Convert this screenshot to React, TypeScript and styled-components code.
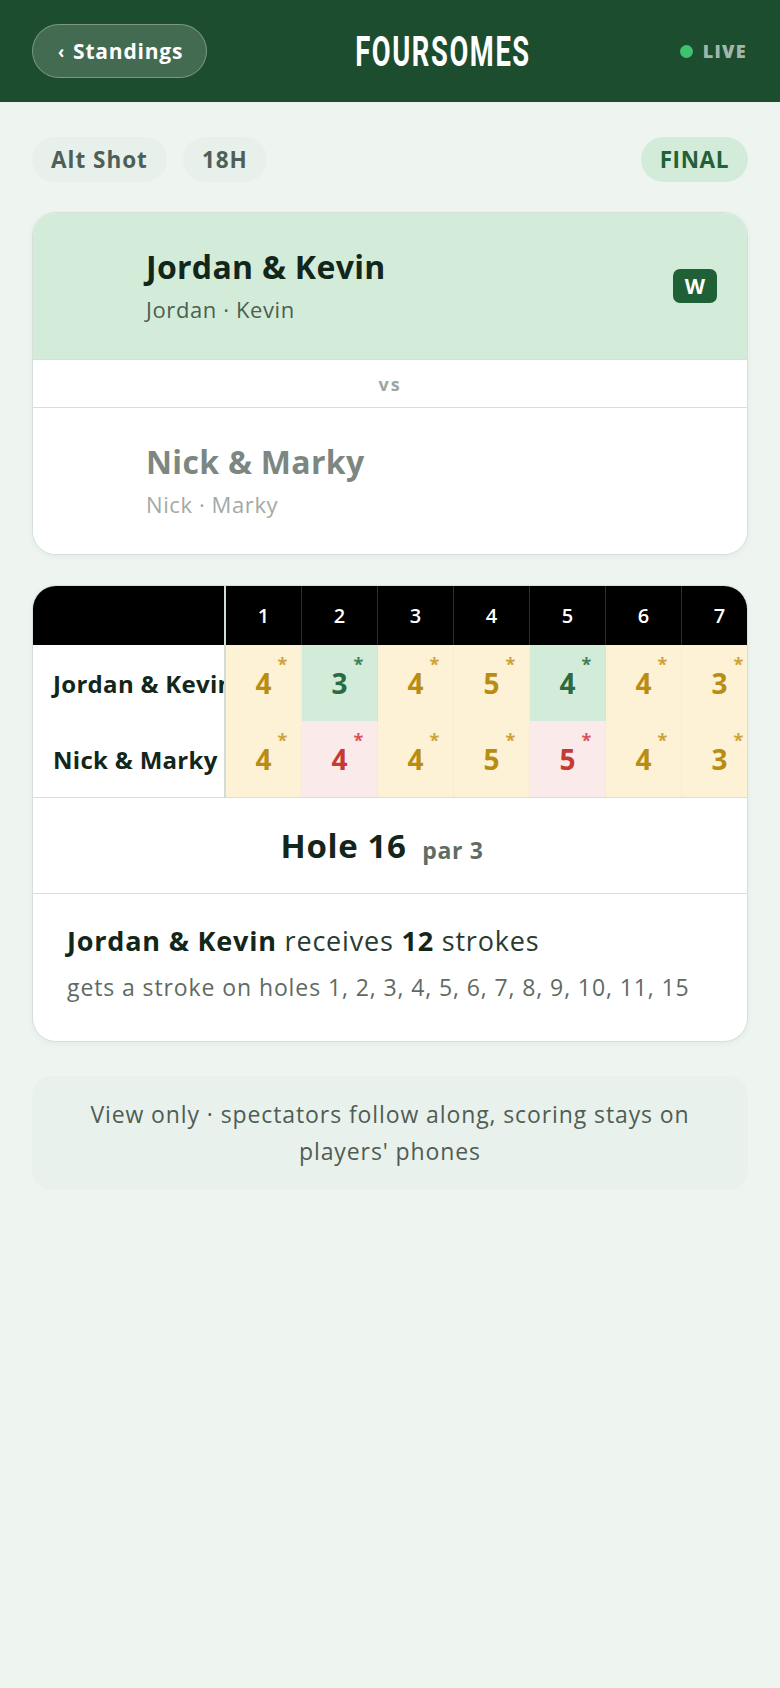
import styled, { createGlobalStyle } from 'styled-components';

const GlobalStyle = createGlobalStyle`
  * {
    box-sizing: border-box;
  }
  body {
    margin: 0;
    background: #eef5f0;
    font-family: 'Open Sans', Lato, sans-serif;
    color: #13261a;
  }
`;

const Page = styled.div`
  min-height: 1688px;
  background: #eef5f0;
`;

const Header = styled.header`
  height: 102px;
  background: #1d4d2f;
  display: flex;
  align-items: center;
  justify-content: space-between;
  padding: 0 33px 0 32px;
`;

const BackButton = styled.button`
  height: 54px;
  padding: 0 23px 0 25px;
  border-radius: 27px;
  background: rgba(255, 255, 255, 0.17);
  border: 1.5px solid rgba(255, 255, 255, 0.3);
  color: #ffffff;
  font-family: 'Open Sans', sans-serif;
  font-weight: 700;
  font-size: 21px;
  letter-spacing: 0.8px;
  display: flex;
  align-items: center;
  gap: 8px;
`;

const Chevron = styled.span`
  font-size: 17px;
  font-weight: 700;
`;

const Title = styled.h1`
  margin: 0;
  color: #ffffff;
  font-family: Roboto, sans-serif;
  font-weight: 700;
  font-size: 42px;
  letter-spacing: 2.5px;
  transform: scaleX(0.65);
  width: 280px;
  text-align: center;
`;

const Live = styled.div`
  display: flex;
  align-items: center;
  gap: 10px;
  color: rgba(255, 255, 255, 0.62);
  font-weight: 800;
  font-size: 18px;
  letter-spacing: 1.3px;
`;

const Dot = styled.span`
  width: 13px;
  height: 13px;
  border-radius: 50%;
  background: #3fc26f;
`;

const Content = styled.main`
  padding: 35px 32px 0;
  display: flex;
  flex-direction: column;
`;

const ChipRow = styled.div`
  display: flex;
  align-items: center;
  gap: 16px;
  margin-bottom: 30px;
`;

const Chip = styled.span<{ $tone?: 'final' }>`
  height: 45px;
  padding: 0 19px;
  border-radius: 23px;
  display: inline-flex;
  align-items: center;
  font-weight: 700;
  font-size: 22.5px;
  letter-spacing: ${({ $tone }) => ($tone === 'final' ? '0.6px' : '1px')};
  background: ${({ $tone }) => ($tone === 'final' ? '#d3ecd9' : '#e8f0eb')};
  color: ${({ $tone }) => ($tone === 'final' ? '#22603a' : '#4e5f55')};
  margin-left: ${({ $tone }) => ($tone === 'final' ? 'auto' : '0')};
`;

const Card = styled.section<{ $last?: boolean }>`
  background: #ffffff;
  border: 1.5px solid #d6dfda;
  border-radius: 24px;
  overflow: hidden;
  box-shadow: 0 2px 6px rgba(20, 60, 35, 0.05);
  margin-bottom: ${({ $last }) => ($last ? '34px' : '30px')};
`;

const TeamRow = styled.div<{ $winner?: boolean }>`
  height: 146px;
  display: flex;
  align-items: center;
  justify-content: space-between;
  padding: 0 30px 0 113px;
  background: ${({ $winner }) => ($winner ? '#d3ecd9' : '#ffffff')};
`;

const TeamText = styled.div`
  display: flex;
  flex-direction: column;
  gap: 6px;
  margin-top: -4px;
`;

const TeamName = styled.div<{ $winner?: boolean }>`
  font-weight: 700;
  font-size: 32px;
  letter-spacing: 0.3px;
  color: ${({ $winner }) => ($winner ? '#13261a' : '#7d8782')};
`;

const Players = styled.div<{ $winner?: boolean }>`
  font-size: 22px;
  letter-spacing: 0.6px;
  color: ${({ $winner }) => ($winner ? '#4d5e53' : '#a2aaa5')};
`;

const WinBadge = styled.span`
  width: 44px;
  height: 34px;
  border-radius: 7px;
  background: #1f6036;
  color: #ffffff;
  font-weight: 700;
  font-size: 21px;
  display: flex;
  align-items: center;
  justify-content: center;
`;

const Versus = styled.div`
  height: 49px;
  border-top: 1.5px solid #d6dfda;
  border-bottom: 1.5px solid #d6dfda;
  display: flex;
  align-items: center;
  justify-content: center;
  font-weight: 700;
  font-size: 18px;
  letter-spacing: 2px;
  color: #9aa79f;
`;

const Scroller = styled.div`
  overflow: hidden;
  border-bottom: 1.5px solid #d6dfda;
`;

const GridRow = styled.div<{ $head?: boolean }>`
  display: flex;
  height: ${({ $head }) => ($head ? '59px' : '76px')};
  background: ${({ $head }) => ($head ? '#000000' : '#ffffff')};
`;

const NameCell = styled.div`
  flex: 0 0 193px;
  border-right: 2px solid #d3ddd8;
  display: flex;
  align-items: center;
  padding-left: 20px;
  font-weight: 700;
  font-size: 24px;
  letter-spacing: 0.3px;
  color: #13261a;
  white-space: nowrap;
  overflow: hidden;
`;

const HoleHead = styled.div`
  flex: 0 0 76px;
  border-right: 1px solid #2c2c2c;
  display: flex;
  align-items: center;
  justify-content: center;
  color: #ffffff;
  font-weight: 600;
  font-size: 20px;
`;

type Result = 'win' | 'loss' | 'halve';

const cellColors: Record<Result, { bg: string; fg: string; star: string }> = {
  win: { bg: '#d3ecd9', fg: '#2a6b41', star: '#3d8057' },
  loss: { bg: '#fbeaea', fg: '#c53a33', star: '#d5535a' },
  halve: { bg: '#fdf2d6', fg: '#b98d12', star: '#cda23a' },
};

const ScoreCell = styled.div<{ $result: Result }>`
  flex: 0 0 76px;
  border-right: 1px solid rgba(0, 0, 0, 0.025);
  display: flex;
  align-items: center;
  justify-content: center;
  background: ${({ $result }) => cellColors[$result].bg};
  color: ${({ $result }) => cellColors[$result].fg};
  font-weight: 700;
  font-size: 28px;
`;

const Score = styled.span`
  position: relative;
  line-height: 1;
`;

const Star = styled.span<{ $result: Result }>`
  position: absolute;
  top: -14px;
  left: 100%;
  margin-left: 6px;
  font-size: 18px;
  font-weight: 700;
  line-height: 1;
  color: ${({ $result }) => cellColors[$result].star};
`;

const HoleInfo = styled.div`
  height: 96px;
  border-bottom: 1.5px solid #d6dfda;
  display: flex;
  align-items: center;
  justify-content: center;
  gap: 16px;
  padding-right: 16px;
`;

const HoleTitle = styled.span`
  font-weight: 700;
  font-size: 33px;
  letter-spacing: 0.6px;
  color: #13261a;
`;

const Par = styled.span`
  font-weight: 700;
  font-size: 23px;
  letter-spacing: 0.6px;
  color: #5e6d64;
  margin-top: 8px;
`;

const Strokes = styled.div`
  padding: 28px 34px 38px;
  display: flex;
  flex-direction: column;
  gap: 12px;
`;

const StrokeLine = styled.div`
  font-size: 27px;
  letter-spacing: 0.8px;
  color: #2a3a30;
  b {
    font-weight: 700;
    color: #13261a;
  }
`;

const StrokeHoles = styled.div`
  font-size: 23px;
  letter-spacing: 0.9px;
  color: #5f6a63;
`;

const Note = styled.div`
  background: #e9f1ec;
  border-radius: 20px;
  padding: 20px 44px;
  text-align: center;
  font-size: 23px;
  letter-spacing: 0.9px;
  line-height: 37px;
  color: #4f5d55;
`;

type Team = { name: string; players: string; scores: number[]; results: Result[] };

const strokeHoles = [1, 2, 3, 4, 5, 6, 7, 8, 9, 10, 11, 15];

const teams: Team[] = [
  {
    name: 'Jordan & Kevin',
    players: 'Jordan · Kevin',
    scores: [4, 3, 4, 5, 4, 4, 3],
    results: ['halve', 'win', 'halve', 'halve', 'win', 'halve', 'halve'],
  },
  {
    name: 'Nick & Marky',
    players: 'Nick · Marky',
    scores: [4, 4, 4, 5, 5, 4, 3],
    results: ['halve', 'loss', 'halve', 'halve', 'loss', 'halve', 'halve'],
  },
];

export default function App() {
  const holes = teams[0].scores.map((_, i) => i + 1);

  return (
    <Page>
      <GlobalStyle />
      <Header>
        <BackButton type="button">
          <Chevron>‹</Chevron>
          Standings
        </BackButton>
        <Title>FOURSOMES</Title>
        <Live>
          <Dot />
          LIVE
        </Live>
      </Header>
      <Content>
        <ChipRow>
          <Chip>Alt Shot</Chip>
          <Chip>18H</Chip>
          <Chip $tone="final">FINAL</Chip>
        </ChipRow>

        <Card>
          <TeamRow $winner>
            <TeamText>
              <TeamName $winner>{teams[0].name}</TeamName>
              <Players $winner>{teams[0].players}</Players>
            </TeamText>
            <WinBadge>W</WinBadge>
          </TeamRow>
          <Versus>vs</Versus>
          <TeamRow>
            <TeamText>
              <TeamName>{teams[1].name}</TeamName>
              <Players>{teams[1].players}</Players>
            </TeamText>
          </TeamRow>
        </Card>

        <Card $last>
          <Scroller>
            <GridRow $head>
              <NameCell />
              {holes.map(h => (
                <HoleHead key={h}>{h}</HoleHead>
              ))}
            </GridRow>
            {teams.map(team => (
              <GridRow key={team.name}>
                <NameCell>{team.name}</NameCell>
                {team.scores.map((s, i) => (
                  <ScoreCell key={i} $result={team.results[i]}>
                    <Score>
                      {s}
                      {strokeHoles.includes(i + 1) ? <Star $result={team.results[i]}>*</Star> : null}
                    </Score>
                  </ScoreCell>
                ))}
              </GridRow>
            ))}
          </Scroller>
          <HoleInfo>
            <HoleTitle>Hole 16</HoleTitle>
            <Par>par 3</Par>
          </HoleInfo>
          <Strokes>
            <StrokeLine>
              <b>Jordan &amp; Kevin</b> receives <b>12</b> strokes
            </StrokeLine>
            <StrokeHoles>gets a stroke on holes {strokeHoles.join(', ')}</StrokeHoles>
          </Strokes>
        </Card>

        <Note>View only · spectators follow along, scoring stays on players' phones</Note>
      </Content>
    </Page>
  );
}
